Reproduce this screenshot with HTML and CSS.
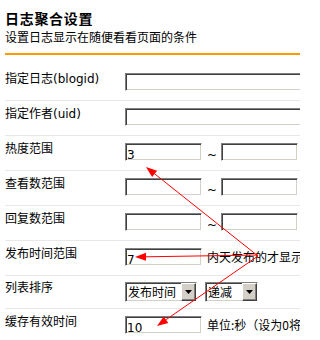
FILE: index.html
```html
<!DOCTYPE html>
<html lang="zh-CN">
<head>
<meta charset="utf-8">
<title>日志聚合设置</title>
<link rel="stylesheet" href="styles.css">
</head>
<body>
<div class="panel">
  <div class="head">
    <h1 class="title">日志聚合设置</h1>
    <p class="desc">设置日志显示在随便看看页面的条件</p>
  </div>
  <div class="form">
    <div class="row first">
      <label class="lbl">指定日志(blogid)</label>
      <div class="ctl"><input class="txt wide" type="text" value=""></div>
    </div>
    <div class="row">
      <label class="lbl">指定作者(uid)</label>
      <div class="ctl"><input class="txt wide" type="text" value=""></div>
    </div>
    <div class="row">
      <label class="lbl">热度范围</label>
      <div class="ctl"><input class="txt" type="text" value="3"><span class="tilde">~</span><input class="txt" type="text" value=""></div>
    </div>
    <div class="row">
      <label class="lbl">查看数范围</label>
      <div class="ctl"><input class="txt" type="text" value=""><span class="tilde">~</span><input class="txt" type="text" value=""></div>
    </div>
    <div class="row">
      <label class="lbl">回复数范围</label>
      <div class="ctl"><input class="txt" type="text" value=""><span class="tilde">~</span><input class="txt" type="text" value=""></div>
    </div>
    <div class="row">
      <label class="lbl">发布时间范围</label>
      <div class="ctl"><input class="txt" type="text" value="7"><span class="note">内天发布的才显示</span></div>
    </div>
    <div class="row sel-row">
      <label class="lbl">列表排序</label>
      <div class="ctl">
        <div class="sel sel-time"><span class="sel-text">发布时间</span><span class="sel-btn"><svg width="7" height="4" viewBox="0 0 7 4"><polygon points="0,0 7,0 3.5,4" fill="#000"/></svg></span></div>
        <div class="sel sel-order"><span class="sel-text">递减</span><span class="sel-btn"><svg width="7" height="4" viewBox="0 0 7 4"><polygon points="0,0 7,0 3.5,4" fill="#000"/></svg></span></div>
      </div>
    </div>
    <div class="row">
      <label class="lbl">缓存有效时间</label>
      <div class="ctl"><input class="txt" type="text" value="10"><span class="note">单位:秒（设为0将不缓存）</span></div>
    </div>
  </div>
</div>
<svg class="arrows" width="300" height="340" viewBox="0 0 300 340">
  <line x1="258" y1="256" x2="154.6" y2="173.8" stroke="#f00" stroke-width="1"/>
  <polygon points="146,167 157.1,170.7 152.1,176.9" fill="#f00"/>
  <line x1="258" y1="255" x2="146" y2="256.8" stroke="#f00" stroke-width="1"/>
  <polygon points="135,257 146,252.8 146,260.8" fill="#f00"/>
  <line x1="258" y1="256" x2="166" y2="319.7" stroke="#f00" stroke-width="1"/>
  <polygon points="157,326 168.3,323 163.7,316.4" fill="#f00"/>
</svg>
</body>
</html>
```
FILE: styles.css
```css
html, body {
  margin: 0;
  padding: 0;
  background: #fff;
  overflow: hidden;
}
body {
  width: 300px;
  height: 340px;
  position: relative;
  font-family: "DejaVu Sans", "Noto Sans CJK SC", sans-serif;
  font-size: 12px;
  color: #000;
}
.panel {
  width: 460px;
  padding-left: 5px;
}
.head {
  padding-top: 8px;
  padding-bottom: 8px;
  border-bottom: 2px solid #ff9900;
  margin-bottom: 10px;
}
.title {
  margin: 0;
  font-family: "Noto Sans CJK SC", sans-serif;
  font-size: 14px;
  line-height: 20px;
  font-weight: bold;
  letter-spacing: 0.7px;
}
.desc {
  margin: 1px 0 0;
  font-family: "Noto Sans CJK SC", sans-serif;
  font-size: 12px;
  line-height: 16px;
}
.row {
  display: flex;
  align-items: flex-start;
  border-top: 1px solid #e8e8e8;
  padding: 7px 0 9px;
}
.row.first {
  border-top-color: transparent;
}
.row.sel-row {
  padding: 6px 0 6px;
}
.lbl {
  flex: none;
  width: 120px;
  line-height: 12px;
  white-space: nowrap;
}
.ctl {
  display: flex;
  align-items: center;
  white-space: nowrap;
}
.txt {
  flex: none;
  box-sizing: border-box;
  width: 77px;
  height: 18px;
  margin: 0;
  padding: 5px 1px 0;
  border: 1px solid;
  border-color: #808080 #ffffff #ffffff #808080;
  box-shadow: inset 1px 1px #404040, inset -1px -1px #d4d0c8;
  background: #fff;
  font-family: "DejaVu Sans", sans-serif;
  font-size: 12px;
  color: #000;
  outline: none;
}
.txt.wide {
  width: 260px;
}
.tilde {
  margin: 0 4px 0 5px;
  padding-top: 5px;
  line-height: 12px;
}
.note {
  margin-left: 5px;
  line-height: 12px;
  font-family: "Noto Sans CJK SC", sans-serif;
}
.sel {
  display: flex;
  align-items: center;
  box-sizing: border-box;
  height: 20px;
  border: 1px solid;
  border-color: #808080 #ffffff #ffffff #808080;
  box-shadow: inset 1px 1px #404040, inset -1px -1px #d4d0c8;
  background: #fff;
}
.sel-time {
  width: 72px;
}
.sel-order {
  width: 53px;
  margin-left: 8px;
}
.sel-text {
  flex: 1;
  padding-left: 2px;
  font-family: "Noto Sans CJK SC", sans-serif;
  line-height: 12px;
}
.sel-btn {
  display: flex;
  align-items: center;
  justify-content: center;
  box-sizing: border-box;
  width: 15px;
  height: 18px;
  background: #d4d0c8;
  border: 1px solid;
  border-color: #ffffff #404040 #404040 #ffffff;
  box-shadow: inset -1px -1px #808080;
}
.sel-btn svg {
  display: block;
}
.arrows {
  position: absolute;
  left: 0;
  top: 0;
  pointer-events: none;
}
```
